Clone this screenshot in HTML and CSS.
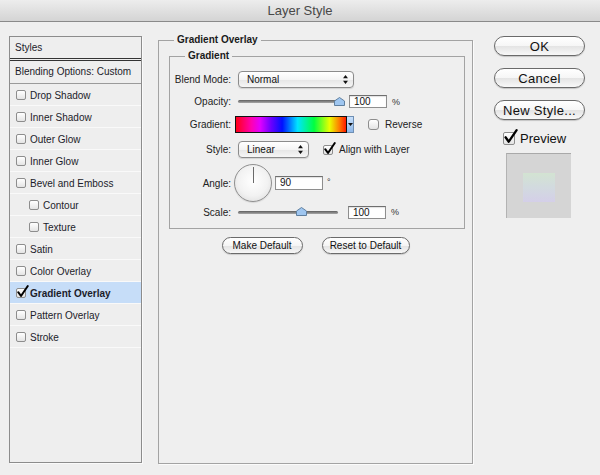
FILE: index.html
```html
<!DOCTYPE html>
<html>
<head>
<meta charset="utf-8">
<title>Layer Style</title>
<link rel="stylesheet" href="styles.css">
</head>
<body>
<header class="titlebar">Layer Style</header>
<div class="main">
  <aside class="styles-list">
    <div class="list-head">Styles</div>
    <div class="list-blend">Blending Options: Custom</div>
    <div class="list-item"><span class="cb"></span>Drop Shadow</div>
    <div class="list-item"><span class="cb"></span>Inner Shadow</div>
    <div class="list-item"><span class="cb"></span>Outer Glow</div>
    <div class="list-item"><span class="cb"></span>Inner Glow</div>
    <div class="list-item"><span class="cb"></span>Bevel and Emboss</div>
    <div class="list-item sub"><span class="cb"></span>Contour</div>
    <div class="list-item sub"><span class="cb"></span>Texture</div>
    <div class="list-item"><span class="cb"></span>Satin</div>
    <div class="list-item"><span class="cb"></span>Color Overlay</div>
    <div class="list-item active"><span class="cb"><svg class="tick" viewBox="0 0 13 13"><path d="M2.2 7.2 L5 11 L11.8 1"/></svg></span>Gradient Overlay</div>
    <div class="list-item"><span class="cb"></span>Pattern Overlay</div>
    <div class="list-item"><span class="cb"></span>Stroke</div>
  </aside>

  <section class="settings">
    <fieldset class="group outer">
      <legend>Gradient Overlay</legend>
      <fieldset class="group inner">
        <legend>Gradient</legend>
        <div class="form">
          <span class="lbl">Blend Mode:</span>
          <div class="ctl">
            <div class="select blend"><span>Normal</span><svg class="updown" viewBox="0 0 6 11"><path d="M3 0 L6 4 L0 4 Z M0 7 L6 7 L3 11 Z"/></svg></div>
          </div>

          <span class="lbl">Opacity:</span>
          <div class="ctl">
            <div class="slider"><div class="track"></div><svg class="thumb thumb-opacity" viewBox="0 0 11 9"><path d="M5.5 0.5 L10.5 4 L10.5 8.5 L0.5 8.5 L0.5 4 Z"/></svg></div>
            <div class="field field-num">100</div>
            <span class="unit">%</span>
          </div>

          <span class="lbl">Gradient:</span>
          <div class="ctl">
            <div class="gradient-pick"><div class="gradient-bar"></div><div class="gradient-drop"><svg viewBox="0 0 5 3"><path d="M0 0 L5 0 L2.5 3 Z"/></svg></div></div>
            <span class="cb cb-big reverse-cb"></span>
            <span class="cb-label">Reverse</span>
          </div>

          <span class="lbl">Style:</span>
          <div class="ctl">
            <div class="select style"><span>Linear</span><svg class="updown" viewBox="0 0 6 11"><path d="M3 0 L6 4 L0 4 Z M0 7 L6 7 L3 11 Z"/></svg></div>
            <span class="cb align-cb"><svg class="tick" viewBox="0 0 13 13"><path d="M2.2 7.2 L5 11 L11.8 1"/></svg></span>
            <span class="cb-label">Align with Layer</span>
          </div>

          <span class="lbl">Angle:</span>
          <div class="ctl">
            <div class="dial"></div>
            <div class="field field-angle">90</div>
            <span class="deg">°</span>
          </div>

          <span class="lbl">Scale:</span>
          <div class="ctl">
            <div class="slider"><div class="track"></div><svg class="thumb thumb-scale" viewBox="0 0 11 9"><path d="M5.5 0.5 L10.5 4 L10.5 8.5 L0.5 8.5 L0.5 4 Z"/></svg></div>
            <div class="field field-num field-scale">100</div>
            <span class="unit">%</span>
          </div>
        </div>
      </fieldset>
      <div class="defaults">
        <button class="pill pill-make">Make Default</button>
        <button class="pill pill-reset">Reset to Default</button>
      </div>
    </fieldset>
  </section>

  <aside class="actions">
    <button class="btn">OK</button>
    <button class="btn">Cancel</button>
    <button class="btn">New Style...</button>
    <div class="preview-row">
      <span class="cb cb-preview"><svg class="tick" viewBox="0 0 13 13"><path d="M2.2 7.2 L5 11 L11.8 1"/></svg></span>
      <span class="preview-label">Preview</span>
    </div>
    <div class="preview-box"><div class="preview-swatch"></div></div>
  </aside>
</div>
</body>
</html>
```

FILE: styles.css
```css
* {
  box-sizing: border-box;
}

html, body {
  margin: 0;
  padding: 0;
}

body {
  width: 600px;
  height: 475px;
  overflow: hidden;
  background: #efefef;
  font-family: "Liberation Sans", Arial, sans-serif;
  font-size: 10px;
  color: #1c1c2a;
}

.titlebar {
  height: 22px;
  border-bottom: 1px solid #8a8a8a;
  background: linear-gradient(#ededed, #d4d4d4);
  text-align: center;
  font-size: 13px;
  line-height: 21px;
  color: #484848;
}

.main {
  display: flex;
  align-items: flex-start;
  padding-left: 9px;
}

/* ---------- Styles list ---------- */
.styles-list {
  margin-top: 14px;
  width: 133px;
  height: 427px;
  border: 1px solid #8c8c8c;
  background: #eeeeee;
  box-shadow: 1px 1px 0 #fafafa;
  display: flex;
  flex-direction: column;
}

.list-head {
  height: 24px;
  line-height: 21px;
  padding-left: 5px;
  border-bottom: 3px double #333;
}

.list-blend {
  height: 23px;
  line-height: 22px;
  padding-left: 5px;
  border-bottom: 1px solid #9a9a9a;
}

.list-item {
  height: 22px;
  display: flex;
  align-items: center;
  gap: 4px;
  padding-left: 6px;
  padding-top: 1px;
  border-bottom: 1px solid #f9f9f9;
}

.list-item.sub {
  padding-left: 19px;
}

.list-item.active {
  background: #c6ddf8;
  font-weight: bold;
}

.cb {
  position: relative;
  flex: none;
  width: 10px;
  height: 10px;
  border: 1px solid #8d8d8d;
  border-radius: 2px;
  background: linear-gradient(#ffffff, #e4e4e4);
}

.tick {
  position: absolute;
  left: -1px;
  top: -4px;
  width: 13px;
  height: 13px;
  overflow: visible;
}

.tick path {
  fill: none;
  stroke: #000;
  stroke-width: 2;
  stroke-linecap: round;
  stroke-linejoin: round;
}

/* ---------- Settings ---------- */
.settings {
  margin-left: 16px;
  margin-top: 12px;
  width: 315px;
}

.group {
  margin: 0;
  padding: 0;
  min-width: 0;
  border: 1px solid #a3a3a3;
}

.group > legend {
  font-weight: bold;
  font-size: 10px;
  line-height: 12px;
  padding: 0 3px;
  margin-left: 15px;
  color: #1a1a1a;
}

.outer {
  height: 430px;
  box-shadow: 1px 1px 0 #fbfbfb;
}

.inner {
  margin: 4px 7px 0 10px;
  padding: 6px 0 8px 0;
}

.form {
  display: grid;
  grid-template-columns: 61px 1fr;
  grid-template-rows: 23px 21px 25px 25px 42px 16px;
  column-gap: 7px;
  align-items: center;
}

.lbl {
  text-align: right;
  color: #222;
}

.ctl {
  display: flex;
  align-items: center;
}

.select {
  display: flex;
  align-items: center;
  justify-content: space-between;
  height: 17px;
  padding: 0 5px 0 8px;
  border: 1px solid #8b8b8b;
  border-radius: 4px;
  background: linear-gradient(#ffffff, #f4f4f4 50%, #e6e6e6 52%, #f6f6f6);
  box-shadow: 0 1px 1px rgba(0, 0, 0, 0.12);
  color: #111;
}

.select.blend {
  width: 116px;
}

.select.style {
  width: 71px;
}

.updown {
  width: 5px;
  height: 9px;
}

.updown path {
  fill: #111;
}

.slider {
  position: relative;
  width: 108px;
  height: 12px;
  display: flex;
  align-items: center;
}

.track {
  width: 100px;
  height: 3px;
  border-radius: 2px;
  background: linear-gradient(#5e5e5e, #a8a8a8);
}

.thumb {
  position: absolute;
  top: 1px;
  width: 11px;
  height: 9px;
}

.thumb path {
  fill: #9fc6f0;
  stroke: #5f7f9f;
  stroke-width: 1;
}

.thumb-opacity {
  left: 96px;
}

.thumb-scale {
  left: 58px;
}

.field {
  height: 13px;
  border: 1px solid #8e8e8e;
  border-top-color: #6f6f6f;
  background: #fff;
  padding-left: 4px;
  line-height: 11px;
  color: #111;
  box-shadow: inset 0 1px 1px rgba(0, 0, 0, 0.12);
}

.field-num {
  width: 38px;
  margin-left: 3px;
}

.field-scale {
  margin-left: 2px;
}

.unit {
  margin-left: 5px;
  font-size: 9px;
  color: #333;
}

.gradient-pick {
  display: flex;
  margin-left: -3px;
  height: 17px;
}

.gradient-bar {
  width: 112px;
  height: 17px;
  border: 1px solid #111;
  background: linear-gradient(to right, #ff0018 0%, #ff00b0 14%, #e000ff 22%, #6a00ff 32%, #0010ff 42%, #00e4ff 56%, #00ff40 71%, #e8ff00 85%, #ff7a00 94%, #ff1a00 100%);
}

.gradient-drop {
  width: 7px;
  height: 17px;
  border: 1px solid #6f8fb3;
  border-left: none;
  background: linear-gradient(#c8e0fb, #8fb8e8);
  display: flex;
  align-items: center;
  justify-content: center;
}

.gradient-drop svg {
  width: 5px;
  height: 3px;
}

.gradient-drop path {
  fill: #111;
}

.cb-big {
  width: 11px;
  height: 11px;
  border-radius: 3px;
}

.reverse-cb {
  margin-left: 14px;
}

.align-cb {
  margin-left: 14px;
}

.cb-label {
  margin-left: 6px;
  color: #222;
}

.dial {
  margin-left: -4px;
  position: relative;
  width: 38px;
  height: 38px;
  border-radius: 50%;
  border: 1px solid #8f8f8f;
  background: radial-gradient(circle at 50% 45%, #ffffff 0%, #f2f2f2 55%, #d6d6d6 100%);
  box-shadow: 0 1px 1px rgba(0, 0, 0, 0.1);
}

.dial::after {
  content: "";
  position: absolute;
  left: 18px;
  top: 2px;
  width: 1px;
  height: 16px;
  background: #6a6a6a;
}

.field-angle {
  width: 48px;
  height: 14px;
  margin-left: 3px;
  line-height: 12px;
}

.deg {
  align-self: flex-start;
  margin-top: 13px;
  margin-left: 4px;
  font-size: 9px;
  color: #333;
}

.defaults {
  display: flex;
  justify-content: center;
  gap: 19px;
  margin-top: 8px;
}

.pill {
  height: 17px;
  padding: 0;
  border: 1px solid #6b6b6b;
  border-radius: 9px;
  background: linear-gradient(#ffffff, #f5f5f5 50%, #e3e3e3 52%, #f7f7f7);
  font-family: "Liberation Sans", Arial, sans-serif;
  font-size: 10px;
  color: #111;
  box-shadow: 0 1px 1px rgba(0, 0, 0, 0.15);
}

.pill-make {
  width: 81px;
}

.pill-reset {
  width: 88px;
}

/* ---------- Actions ---------- */
.actions {
  margin-left: 21px;
  margin-top: 14px;
  width: 91px;
  display: flex;
  flex-direction: column;
  align-items: flex-start;
}

.btn {
  width: 91px;
  height: 20px;
  margin-bottom: 12px;
  padding: 0;
  border: 1px solid #6a6a6a;
  border-radius: 10px;
  background: linear-gradient(#ffffff, #f6f6f6 50%, #e4e4e4 52%, #f8f8f8);
  font-family: "Liberation Sans", Arial, sans-serif;
  font-size: 13px;
  letter-spacing: 0.3px;
  color: #111;
  box-shadow: 0 1px 1px rgba(0, 0, 0, 0.18);
}

.preview-row {
  display: flex;
  align-items: center;
  height: 13px;
  margin-left: 9px;
}

.cb-preview {
  width: 12px;
  height: 13px;
  border-radius: 2px;
}

.cb-preview .tick {
  width: 15px;
  height: 15px;
  top: -4px;
  left: -1px;
}

.preview-label {
  margin-left: 5px;
  font-size: 13px;
  color: #111;
}

.preview-box {
  margin-top: 8px;
  margin-left: 12px;
  width: 65px;
  height: 65px;
  background: #d5d5d5;
  border-top: 1px solid #a9a9a9;
  border-left: 1px solid #b3b3b3;
  display: flex;
  align-items: center;
  justify-content: center;
  padding-top: 3px;
}

.preview-swatch {
  width: 32px;
  height: 29px;
  background: linear-gradient(#d3e3d2, #d2dadf 50%, #d4cfe8);
}
```
